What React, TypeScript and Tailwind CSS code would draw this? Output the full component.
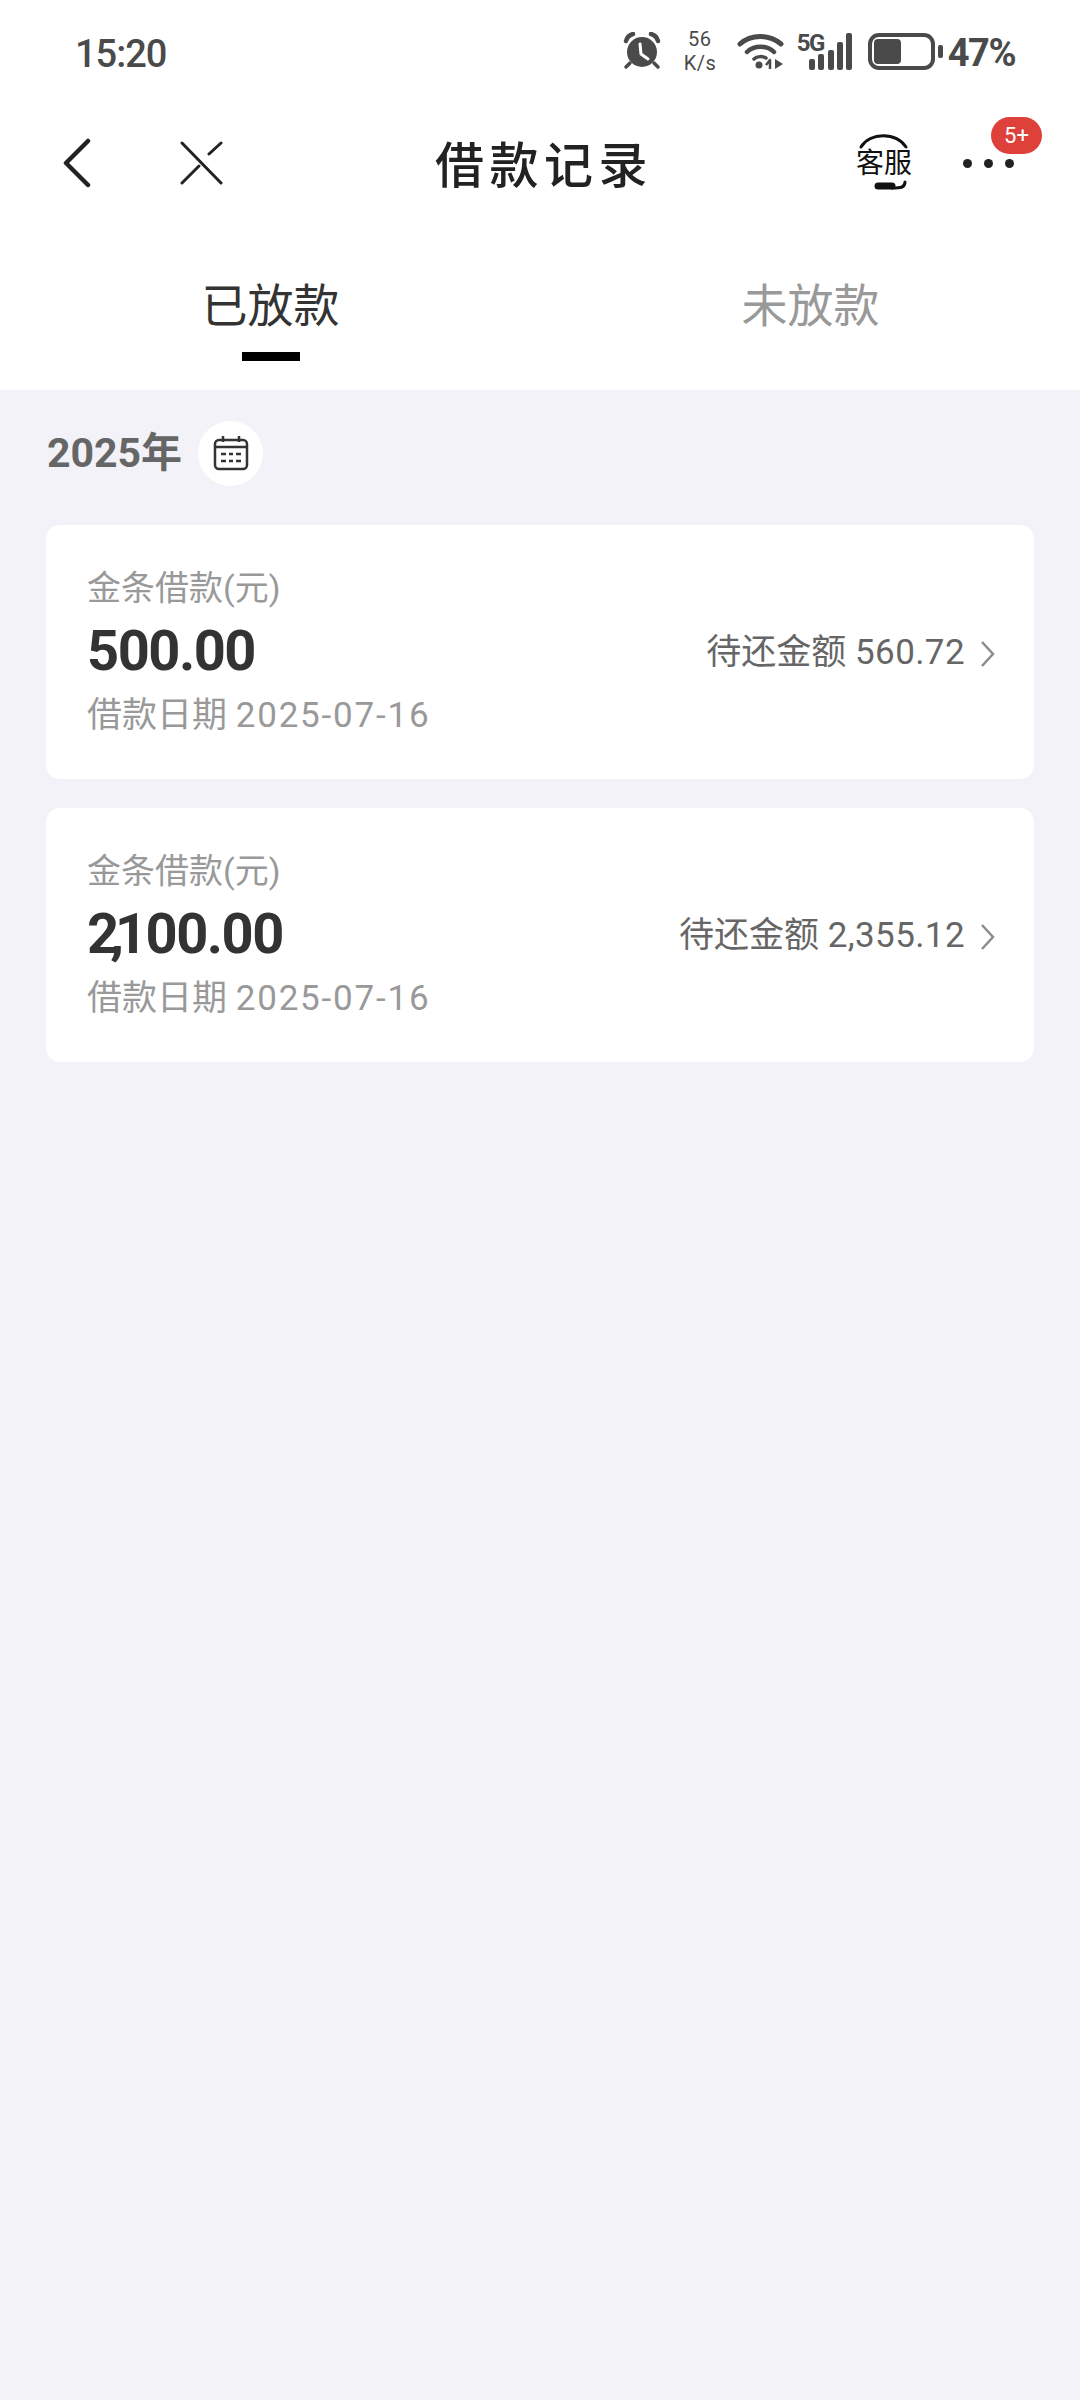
const loans = [
  { amount: '500.00', due: '560.72', date: '2025-07-16' },
  { amount: '2,100.00', due: '2,355.12', date: '2025-07-16' },
]

function AlarmIcon() {
  return (
    <svg width="38" height="38" viewBox="0 0 38 38" className="block">
      <circle cx="19" cy="20" r="15" fill="#4a4a4a" />
      <path d="M3 9 C4 5 6 3 10 2" stroke="#4a4a4a" strokeWidth="4.5" fill="none" strokeLinecap="round" />
      <path d="M35 9 C34 5 32 3 28 2" stroke="#4a4a4a" strokeWidth="4.5" fill="none" strokeLinecap="round" />
      <path d="M7 31 L3 35 M31 31 L35 35" stroke="#4a4a4a" strokeWidth="3.5" strokeLinecap="round" />
      <path d="M17 12 L18 22 L25 27" stroke="#fff" strokeWidth="3" fill="none" strokeLinecap="round" strokeLinejoin="round" />
    </svg>
  )
}

function WifiIcon() {
  return (
    <svg width="48" height="37" viewBox="0 0 48 37" className="block">
      <path d="M3 11 C14 1 32 1 44 11" stroke="#4a4a4a" strokeWidth="5" fill="none" strokeLinecap="round" />
      <path d="M10 19 C17 12 30 12 37 19" stroke="#4a4a4a" strokeWidth="4.5" fill="none" strokeLinecap="round" />
      <path d="M17 26 C20 23 26 23 29 25" stroke="#4a4a4a" strokeWidth="3.5" fill="none" strokeLinecap="round" />
      <circle cx="22" cy="32" r="3.5" fill="#4a4a4a" />
      <path d="M33 36 V27 L29 32" stroke="#4a4a4a" strokeWidth="2.5" fill="none" strokeLinejoin="round" />
      <path d="M38 26 V36 L46 31 Z" fill="#4a4a4a" />
    </svg>
  )
}

function SignalIcon() {
  return (
    <svg width="43" height="37" viewBox="0 0 43 37" className="block">
      <rect x="0" y="26" width="6" height="11" rx="2" fill="#4a4a4a" />
      <rect x="9" y="21" width="6" height="16" rx="2" fill="#4a4a4a" />
      <rect x="19" y="17" width="6" height="20" rx="2" fill="#4a4a4a" />
      <rect x="28" y="9" width="6" height="28" rx="2" fill="#4a4a4a" />
      <rect x="37" y="0" width="6" height="37" rx="2" fill="#4a4a4a" />
    </svg>
  )
}

function BackIcon() {
  return (
    <svg width="30" height="50" viewBox="0 0 30 50" className="block">
      <path d="M26 3 L4 25 L26 47" stroke="#222" strokeWidth="4.5" fill="none" strokeLinecap="round" strokeLinejoin="round" />
    </svg>
  )
}

function CloseIcon() {
  return (
    <svg width="44" height="44" viewBox="0 0 44 44" className="block">
      <path d="M3 2 L42 42 M3 42 L20 25 M30 13 L42 2" stroke="#222" strokeWidth="3" fill="none" strokeLinecap="round" />
    </svg>
  )
}

// arc over the label and the microphone under it; the label itself is real text
function ServiceIcon() {
  return (
    <div className="relative h-[58px] w-[60px]">
      <svg width="60" height="58" viewBox="0 0 60 58" className="absolute inset-0 block">
        <path d="M7 13 C16 -2 42 -2 52 13" stroke="#111" strokeWidth="3" fill="none" strokeLinecap="round" />
        <path d="M24 52 H38" stroke="#111" strokeWidth="7" strokeLinecap="round" />
        <path d="M38 54 C46 54 51 54 51 48" stroke="#111" strokeWidth="3" fill="none" strokeLinecap="round" />
      </svg>
      <div className="absolute inset-x-0 top-[13px] text-center text-[28px] leading-[34px] whitespace-nowrap text-[#111]">客服</div>
    </div>
  )
}

function CalendarIcon() {
  return (
    <svg width="36" height="36" viewBox="0 0 36 36" className="block">
      <rect x="2" y="5" width="32" height="29" rx="4" stroke="#333" strokeWidth="2.5" fill="none" />
      <path d="M2 12 H34 M10 1 V7 M26 1 V7" stroke="#333" strokeWidth="2.5" />
      <path d="M8 19 H13 M16 19 H20 M23 19 H28 M8 26 H13 M16 26 H20 M23 26 H28" stroke="#333" strokeWidth="2.5" />
    </svg>
  )
}

function ChevronIcon() {
  return (
    <svg width="16" height="28" viewBox="0 0 16 28" className="block">
      <path d="M2 2 L13 14 L2 26" stroke="#8c8c8c" strokeWidth="2.5" fill="none" />
    </svg>
  )
}

// the comma sits tight between the digits in the picture
function Amount({ value }: { value: string }) {
  const comma = value.indexOf(',')
  if (comma < 0) return <>{value}</>
  return (
    <>
      <span className="tracking-[-9px]">{value.slice(0, comma + 1)}</span>
      {value.slice(comma + 1)}
    </>
  )
}

function LoanCard({ amount, due, date }: { amount: string; due: string; date: string }) {
  return (
    <div className="flex items-center justify-between rounded-[14px] bg-white pl-[41px] pr-[38px] pt-[32px] pb-[31px]">
      <div>
        <div className="text-[34px] leading-[63px] text-[#999]">金条借款(元)</div>
        <div className="text-[56px] leading-[63px] font-bold text-[#333] tracking-[-1.5px]">
          <Amount value={amount} />
        </div>
        <div className="text-[35px] leading-[65px] text-[#999]">
          借款日期 <span className="tracking-[1.8px]">{date}</span>
        </div>
      </div>
      <div className="flex items-center gap-[15px] pt-[2px]">
        <span className="text-[35px] text-[#666]">
          待还金额 <span className="tracking-[0.4px]">{due}</span>
        </span>
        <ChevronIcon />
      </div>
    </div>
  )
}

export default function App() {
  return (
    <div className="min-h-[2400px] bg-[#f2f2f8] font-[Roboto,'Noto_Sans_CJK_SC',sans-serif]">
      <div className="bg-white">
        <div className="flex h-[106px] items-center justify-between pb-[4px] pl-[75px] pr-[65px]">
          <span className="pt-[6px] text-[38px] font-medium tracking-[-1px] text-[#4a4a4a]">15:20</span>
          <div className="flex items-center">
            <AlarmIcon />
            <div className="ml-[23px] w-[32px] text-center text-[20px] leading-[24px] tracking-[0.5px] text-[#4a4a4a]">
              <div>56</div>
              <div>K/s</div>
            </div>
            <div className="ml-[21px]">
              <WifiIcon />
            </div>
            <div className="relative ml-[11px] w-[56px]">
              <span className="absolute left-[1px] top-[-2px] text-[24px] leading-[24px] font-bold tracking-[-1.5px] text-[#4a4a4a]">5G</span>
              <div className="flex justify-end">
                <SignalIcon />
              </div>
            </div>
            <div className="ml-[16px] flex h-[37px] w-[67px] items-center rounded-[11px] border-[4px] border-[#4a4a4a] p-[2px]">
              <div className="h-full w-[27px] rounded-[4px] bg-[#4a4a4a]" />
            </div>
            <div className="ml-[3px] h-[13px] w-[5px] rounded-[2px] bg-[#4a4a4a]" />
            <span className="ml-[5px] pt-[5px] text-[38px] font-bold tracking-[-1.5px] text-[#4a4a4a]">47%</span>
          </div>
        </div>

        <div className="relative flex h-[114px] items-center justify-between pl-[62px] pr-[66px]">
          <div className="flex items-center gap-[87px]">
            <BackIcon />
            <CloseIcon />
          </div>
          <h1 className="absolute inset-x-0 pl-[8px] pt-[8px] text-center text-[49px] font-medium tracking-[5.5px] text-[#222]">借款记录</h1>
          <div className="z-10 flex items-center gap-[49px]">
            <ServiceIcon />
            <div className="relative flex gap-[12px]">
              <span className="h-[9px] w-[9px] rounded-full bg-[#222]" />
              <span className="h-[9px] w-[9px] rounded-full bg-[#222]" />
              <span className="h-[9px] w-[9px] rounded-full bg-[#222]" />
              <span className="absolute left-[28px] top-[-42px] flex h-[37px] w-[51px] items-center justify-center rounded-full bg-[#de403a] text-[22px] text-white">5+</span>
            </div>
          </div>
        </div>

        <div className="grid h-[170px] grid-cols-[541px_1fr]">
          <div className="flex flex-col items-center pt-[56px]">
            <span className="text-[46px] leading-[60px] text-[#333]">已放款</span>
            <div className="mt-[16px] h-[9px] w-[58px] bg-black" />
          </div>
          <div className="flex flex-col items-center pt-[56px]">
            <span className="text-[46px] leading-[60px] text-[#999]">未放款</span>
          </div>
        </div>
      </div>

      <div className="flex items-center pl-[47px] pt-[30px]">
        <span className="pt-[1px] text-[41px] leading-[65px] font-bold text-[#666]">2025年</span>
        <div className="ml-[16px] flex h-[65px] w-[65px] items-center justify-center rounded-full bg-white">
          <CalendarIcon />
        </div>
      </div>

      <div className="flex flex-col gap-[29px] px-[46px] pt-[39px]">
        {loans.map((loan) => (
          <LoanCard key={loan.amount} {...loan} />
        ))}
      </div>
    </div>
  )
}
